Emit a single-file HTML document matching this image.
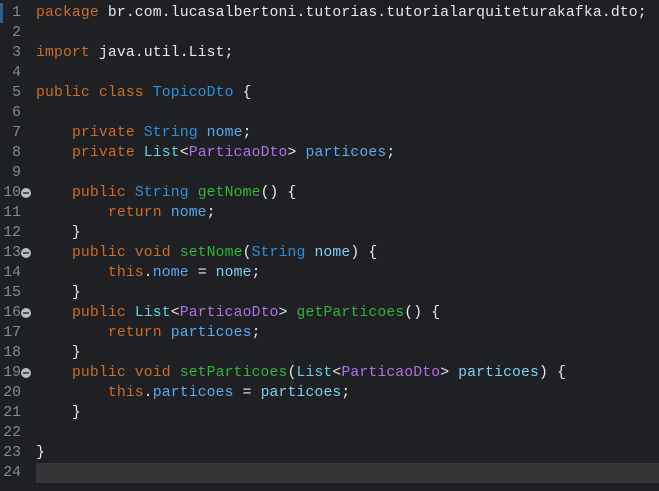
<!DOCTYPE html><html><head><style>
body{margin:0;background:#1f2023;width:659px;height:491px;overflow:hidden;font-family:"Liberation Mono",monospace;font-size:14.75px;}
.l{position:absolute;left:0;width:659px;height:20px;line-height:21px;white-space:pre;color:#e8e8e8}
.c{letter-spacing:0.13px}
.n{position:absolute;left:0;width:21px;text-align:right;color:#7e8b96}
.c{position:absolute;left:36px}
.k{color:#cc6c28}.t{color:#2f8fd8}.y{color:#5fd0e0}.p{color:#b070e8}.m{color:#2fb33a}.f{color:#5aa8f0}.o{color:#7fd0f0}
.dot{position:absolute;left:21px;top:5px;width:10px;height:10px;border-radius:50%;background:#b8bcc0}
.dot:after{content:"";position:absolute;left:2px;top:4px;width:6px;height:2px;background:#555}
</style></head><body>
<div style="position:absolute;left:0;top:3px;width:3px;height:20px;background:#2a5f8a"></div>
<div style="position:absolute;left:36px;top:463px;width:623px;height:20px;background:#343536"></div>
<div class="l" style="top:3px"><span class="n">1</span><span class="c"><span class="k">package</span> br.com.lucasalbertoni.tutorias.tutorialarquiteturakafka.dto;</span></div>
<div class="l" style="top:23px"><span class="n">2</span></div>
<div class="l" style="top:43px"><span class="n">3</span><span class="c"><span class="k">import</span> java.util.List;</span></div>
<div class="l" style="top:63px"><span class="n">4</span></div>
<div class="l" style="top:83px"><span class="n">5</span><span class="c"><span class="k">public class</span> <span class="t">TopicoDto</span> {</span></div>
<div class="l" style="top:103px"><span class="n">6</span></div>
<div class="l" style="top:123px"><span class="n">7</span><span class="c">    <span class="k">private</span> <span class="t">String</span> <span class="f">nome</span>;</span></div>
<div class="l" style="top:143px"><span class="n">8</span><span class="c">    <span class="k">private</span> <span class="y">List</span>&lt;<span class="p">ParticaoDto</span>&gt; <span class="f">particoes</span>;</span></div>
<div class="l" style="top:163px"><span class="n">9</span></div>
<div class="l" style="top:183px"><span class="n">10</span><span class="dot"></span><span class="c">    <span class="k">public</span> <span class="t">String</span> <span class="m">getNome</span>() {</span></div>
<div class="l" style="top:203px"><span class="n">11</span><span class="c">        <span class="k">return</span> <span class="f">nome</span>;</span></div>
<div class="l" style="top:223px"><span class="n">12</span><span class="c">    }</span></div>
<div class="l" style="top:243px"><span class="n">13</span><span class="dot"></span><span class="c">    <span class="k">public void</span> <span class="m">setNome</span>(<span class="t">String</span> <span class="o">nome</span>) {</span></div>
<div class="l" style="top:263px"><span class="n">14</span><span class="c">        <span class="k">this</span>.<span class="f">nome</span> = <span class="o">nome</span>;</span></div>
<div class="l" style="top:283px"><span class="n">15</span><span class="c">    }</span></div>
<div class="l" style="top:303px"><span class="n">16</span><span class="dot"></span><span class="c">    <span class="k">public</span> <span class="y">List</span>&lt;<span class="p">ParticaoDto</span>&gt; <span class="m">getParticoes</span>() {</span></div>
<div class="l" style="top:323px"><span class="n">17</span><span class="c">        <span class="k">return</span> <span class="f">particoes</span>;</span></div>
<div class="l" style="top:343px"><span class="n">18</span><span class="c">    }</span></div>
<div class="l" style="top:363px"><span class="n">19</span><span class="dot"></span><span class="c">    <span class="k">public void</span> <span class="m">setParticoes</span>(<span class="y">List</span>&lt;<span class="p">ParticaoDto</span>&gt; <span class="o">particoes</span>) {</span></div>
<div class="l" style="top:383px"><span class="n">20</span><span class="c">        <span class="k">this</span>.<span class="f">particoes</span> = <span class="o">particoes</span>;</span></div>
<div class="l" style="top:403px"><span class="n">21</span><span class="c">    }</span></div>
<div class="l" style="top:423px"><span class="n">22</span></div>
<div class="l" style="top:443px"><span class="n">23</span><span class="c">}</span></div>
<div class="l" style="top:463px"><span class="n">24</span></div>
</body></html>
